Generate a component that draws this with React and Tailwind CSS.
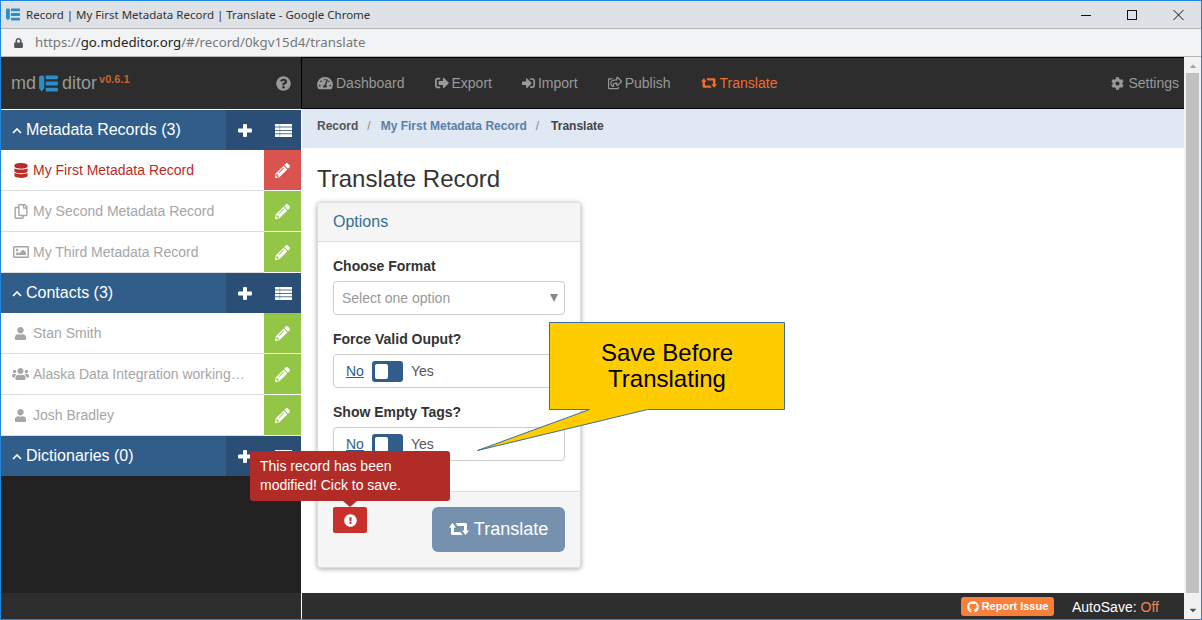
import React from "react";
import {
  FaLock, FaQuestionCircle, FaTachometerAlt, FaSignOutAlt, FaSignInAlt, FaRegShareSquare, FaCog,
  FaPencilAlt, FaDatabase, FaRegCopy, FaRegImage, FaUser, FaUsers, FaGithub, FaExclamationCircle, FaCaretDown, FaCaretUp,
} from "react-icons/fa";

const sans = "font-['Liberation_Sans',Arial,sans-serif]";

function Mark({ className }) {
  return (
    <svg viewBox="0 0 20 18" className={className} fill="#2a8fc8">
      <path d="M0 2.5a2 2 0 0 1 2-2h1.5a2 2 0 0 1 2 2V14l-2.7 3.6L0 14z" />
      <rect x="7" y="0.5" width="13" height="4" rx="1" />
      <rect x="7" y="7" width="13" height="4" rx="1" />
      <rect x="7" y="13.5" width="13" height="4" rx="1" />
    </svg>
  );
}

function Retweet({ className }) {
  return (
    <svg viewBox="0 0 20 14" className={className} fill="currentColor">
      <path d="M0 5.5L3.5 1 7 5.5H5V10h6.5l2 3H3.6A1.6 1.6 0 0 1 2 11.4V5.5z" />
      <path d="M20 8.5L16.5 13 13 8.5h2V4H8.5l-2-3h9.900A1.600 1.600 0 0 1 18 2.600V8.500z" />
    </svg>
  );
}

function Chevron() {
  return (
    <svg viewBox="0 0 10 6" className="w-[10px] h-[6px] mr-[4px] mt-[2px]" fill="none" stroke="#fff" strokeWidth="1.7">
      <path d="M1 5l4-4 4 4" />
    </svg>
  );
}

function SectionHead({ title }) {
  return (
    <div className="flex h-10 bg-[#315d8a] text-white">
      <div className="flex-1 flex items-center pl-[11px] text-base">
        <Chevron />
        <span>{title}</span>
      </div>
      <div className="w-[75px] bg-[#2a4e75] flex items-center">
        <svg viewBox="0 0 14 13" className="w-[14px] h-[13px] ml-[12px]" fill="#fff">
          <path d="M5 1a1 1 0 0 1 1-1h2a1 1 0 0 1 1 1v3.500h4a1 1 0 0 1 1 1v2a1 1 0 0 1-1 1H9V12a1 1 0 0 1-1 1H6a1 1 0 0 1-1-1V8.500H1a1 1 0 0 1-1-1v-2a1 1 0 0 1 1-1h4z" />
        </svg>
        <svg viewBox="0 0 17 13" className="w-[17px] h-[13px] ml-[23px]" fill="#fff">
          <rect x="0" y="0" width="17" height="2.600" />
          <rect x="0" y="3.400" width="17" height="2.600" />
          <rect x="0" y="6.800" width="17" height="2.600" />
          <rect x="0" y="10.200" width="17" height="2.800" />
          <rect x="4.500" y="0" width="0.700" height="13" fill="#2a4e75" opacity="0.5" />
        </svg>
      </div>
    </div>
  );
}

function Item({ icon: Icon, iconClass, text, active }) {
  return (
    <div className="flex h-[41px] bg-white">
      <div className={`flex-1 min-w-0 flex items-center border-b border-[#ddd] ${active ? "text-[#b92c28]" : "text-[#a6a6a6]"}`}>
        <span className="w-[32px] flex justify-center shrink-0 pl-[7px]">
          <Icon className={iconClass} />
        </span>
        <span className="whitespace-nowrap text-sm">{text}</span>
      </div>
      <div className={`w-[37px] flex items-center justify-center border-b border-white ${active ? "bg-[#d9534f]" : "bg-[#93c647]"}`}>
        <FaPencilAlt className="w-[15px] h-[15px] text-white" />
      </div>
    </div>
  );
}

function NavLink({ icon: Icon, text, iconClass, className = "text-[#999]" }) {
  return (
    <div className={`flex items-center px-[15px] text-sm ${className}`}>
      <Icon className={`h-[14px] mr-[3px] ${iconClass}`} />
      <span>{text}</span>
    </div>
  );
}

function Toggle() {
  return (
    <div className="h-[34px] border border-[#ccc] rounded-[4px] flex items-center pl-[12px] text-sm text-[#555]">
      <span className="underline text-[#315d8a]">No</span>
      <span className="ml-[8px] w-[31px] h-[21px] bg-[#315d8a] rounded-[3px] flex items-center pl-[3px]">
        <span className="w-[13px] h-[15px] bg-white rounded-[2px]" />
      </span>
      <span className="ml-[8px]">Yes</span>
    </div>
  );
}

export default function App() {
  return (
    <div className={`${sans} relative w-[1202px] h-[620px] overflow-hidden flex flex-col bg-white border border-[#1f86dc]`}>
      {/* window title bar */}
      <div className="h-[28px] shrink-0 bg-[#dee1e6] border-b border-[#b5b5b5] flex items-center pl-[5px] font-['Noto_Sans',sans-serif] text-[11.5px] text-[#333]">
        <Mark className="w-[14px] h-[13px] mr-[6px]" />
        <span className="flex-1">Record | My First Metadata Record | Translate - Google Chrome</span>
        <svg viewBox="0 0 103 14" className="w-[103px] h-[14px] mr-[17px]" fill="none" stroke="#111" strokeWidth="1">
          <path d="M0 7.500h10" />
          <rect x="46.500" y="2.500" width="9" height="9" />
          <path d="M92.500 2l10 10M102.500 2l-10 10" />
        </svg>
      </div>
      {/* url bar */}
      <div className="h-[28px] shrink-0 bg-[#f1f3f5] border-b border-[#b5b5b5] flex items-center pl-[13px] font-['Noto_Sans',sans-serif] text-[13.25px] text-[#777]">
        <FaLock className="w-[9px] h-[10px] text-[#555] mr-[12px]" />
        <span>
          https://<span className="text-[#222]">go.mdeditor.org</span>/#/record/0kgv15d4/translate
        </span>
      </div>

      <div className="flex-1 min-h-0 flex">
        {/* sidebar */}
        <div className="w-[300px] shrink-0 flex flex-col bg-[#222] border-r border-white box-content">
          <div className="h-[52px] bg-[#2d2d2d] border-b border-white flex items-center pl-[10px] pr-[10px] text-[#999] box-content">
            <span className="text-lg mr-[3px]">md</span>
            <Mark className="w-[19px] h-[17px]" />
            <span className="text-lg ml-[4px]">ditor</span>
            <span className="text-[11px] font-bold text-[#c8642d] ml-[2px] mb-[8px]">v0.6.1</span>
            <FaQuestionCircle className="ml-auto w-[15px] h-[15px] text-[#999]" />
          </div>
          <SectionHead title="Metadata Records (3)" />
          <Item icon={FaDatabase} iconClass="w-[14px] h-[15px]" text="My First Metadata Record" active />
          <Item icon={FaRegCopy} iconClass="w-[14px] h-[15px]" text="My Second Metadata Record" />
          <Item icon={FaRegImage} iconClass="w-[16px] h-[16px]" text="My Third Metadata Record" />
          <SectionHead title="Contacts (3)" />
          <Item icon={FaUser} iconClass="w-[13px] h-[13px]" text="Stan Smith" />
          <Item icon={FaUsers} iconClass="w-[17px] h-[16px]" text="Alaska Data Integration working…" />
          <Item icon={FaUser} iconClass="w-[13px] h-[13px]" text="Josh Bradley" />
          <SectionHead title="Dictionaries (0)" />
          <div className="flex-1" />
          <div className="h-[26px] bg-[#2d2d2d]" />
        </div>

        {/* main column */}
        <div className="flex-1 min-w-0 flex flex-col">
          <div className="h-[52px] shrink-0 bg-[#2d2d2d] border-y border-l border-black -ml-[1px] flex">
            <NavLink icon={FaTachometerAlt} iconClass="w-[16px]" text="Dashboard" />
            <NavLink icon={FaSignOutAlt} iconClass="w-[14px]" text="Export" />
            <NavLink icon={FaSignInAlt} iconClass="w-[13px]" text="Import" />
            <NavLink icon={FaRegShareSquare} iconClass="w-[14px]" text="Publish" />
            <NavLink icon={Retweet} iconClass="w-[16px]" text="Translate" className="text-[#f26c2d]" />
            <div className="ml-auto flex items-center pr-[5px] text-sm text-[#999]">
              <FaCog className="w-[13px] h-[13px] mr-[4px]" />
              <span>Settings</span>
            </div>
          </div>
          <div className="h-[39px] shrink-0 bg-[#dfe8f3] pl-[15px] flex items-center pb-[6px] text-xs font-bold text-[#444]">
            <span className="text-[#555]">Record</span>
            <span className="mx-[9px] font-normal text-[#888]">/</span>
            <span className="ml-[1px] text-[#5a7fa8]">My First Metadata Record</span>
            <span className="mx-[9px] font-normal text-[#888]">/</span>
            <span className="ml-[3px]">Translate</span>
          </div>
          <div className="flex-1 min-h-0 pl-[15px] bg-white">
            <h1 className="text-2xl leading-[26px] text-[#333] mt-[18px] mb-[10px]">Translate Record</h1>
            <div className="w-[264px] h-[366px] rounded-[4px] border border-[#ddd] shadow-[0_1px_5px_rgba(0,0,0,0.35)] flex flex-col bg-white">
              <div className="h-[39px] shrink-0 bg-[#f5f5f5] border-b border-[#ddd] rounded-t-[4px] flex items-center pl-[15px] text-base text-[#31708f]">
                Options
              </div>
              <div className="flex-1 px-[15px] pt-[14px]">
                <div className="text-sm font-bold text-[#333] leading-[20px] mb-[5px]">Choose Format</div>
                <div className="h-[34px] border border-[#ccc] rounded-[4px] flex items-center pl-[8px] pr-[6px] text-sm text-[#999]">
                  <span className="flex-1">Select one option</span>
                  <span className="w-0 h-0 border-x-[4px] border-x-transparent border-t-[8px] border-t-[#888]" />
                </div>
                <div className="text-sm font-bold text-[#333] leading-[20px] mt-[14px] mb-[5px]">Force Valid Ouput?</div>
                <Toggle />
                <div className="text-sm font-bold text-[#333] leading-[20px] mt-[14px] mb-[5px]">Show Empty Tags?</div>
                <Toggle />
              </div>
              <div className="h-[76px] shrink-0 bg-[#f5f5f5] border-t border-[#ddd] rounded-b-[4px] px-[15px] pt-[15px] flex justify-between items-start">
                <div className="w-[34px] h-[26px] bg-[#c9302c] rounded-[2px] flex items-center justify-center">
                  <FaExclamationCircle className="w-[13px] h-[13px] text-white" />
                </div>
                <div className="w-[133px] h-[45px] bg-[#7691ae] rounded-[6px] flex items-center justify-center pb-[2px] text-lg text-white">
                  <Retweet className="w-[20px] h-[14px] mr-[5px]" />
                  Translate
                </div>
              </div>
            </div>
          </div>
          <div className="h-[26px] shrink-0 bg-[#2d2d2d] flex items-center justify-end pr-[22px] pt-[1px] text-sm">
            <div className="h-[19px] w-[93px] bg-[#f9803a] rounded-[3px] flex items-center justify-center text-[11px] font-bold text-white mr-[18px]">
              <FaGithub className="w-[12px] h-[12px] mr-[3px]" />
              Report Issue
            </div>
            <span className="text-white">AutoSave:</span>
            <span className="text-[#e8875a] ml-[4px] mr-[3px]">Off</span>
          </div>
        </div>

        {/* scrollbar */}
        <div className="w-[17px] shrink-0 bg-[#f1f1f1] flex flex-col items-center">
          <FaCaretUp className="w-[12px] h-[10px] text-[#a3a3a3] mt-[4px]" />
          <div className="w-[13px] h-[520px] bg-[#c1c1c1] mt-[2px] -ml-[1px]" />
          <FaCaretDown className="w-[12px] h-[10px] text-[#505050] mt-[12px]" />
        </div>
      </div>

      {/* save tooltip */}
      <div className="absolute left-[249px] top-[450px] w-[200px] h-[50px] bg-[#b22c27] rounded-[3px] px-[10px] py-[6px] text-sm leading-[19px] text-white">
        This record has been
        <br />
        modified! Cick to save.
        <span className="absolute left-[93px] top-[50px] w-0 h-0 border-x-[7px] border-x-transparent border-t-[6px] border-t-[#b22c27]" />
      </div>

      {/* callout */}
      <div className="absolute left-[476px] top-[321px] w-[310px] h-[132px]">
        <svg viewBox="0 0 310 132" className="absolute inset-0 w-[310px] h-[132px]">
          <path d="M72.500 .5H307.500V87.500H170.500L.5 128.500 112.500 87.500H72.500Z" fill="#ffcc00" stroke="#3a6ea5" strokeWidth="1" />
        </svg>
        <div className="absolute left-[72px] top-[18px] w-[236px] text-center font-['Liberation_Sans',sans-serif] text-2xl leading-[26px] text-black">
          Save Before
          <br />
          Translating
        </div>
      </div>
    </div>
  );
}
